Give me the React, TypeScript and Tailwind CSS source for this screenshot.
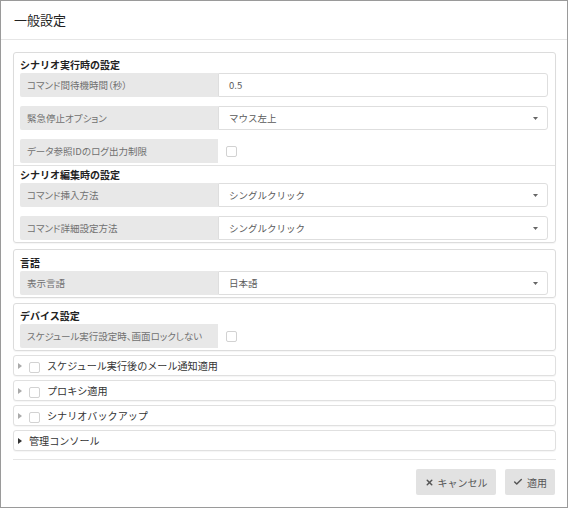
import React from "react";
import { X, Check } from "lucide-react";

const font = { fontFamily: '"Noto Sans CJK JP", "Noto Sans", sans-serif' };

function Caret() {
  return (
    <svg width="5" height="3" viewBox="0 0 5 3" className="mr-[9px]">
      <path d="M0 0 L5 0 L2.5 3 Z" fill="#666" />
    </svg>
  );
}

function Box() {
  return <span className="inline-block h-[11px] w-[11px] rounded-[2px] border border-[#d2d2d2] bg-white" />;
}

function Row({ label, children, className = "" }: { label: string; children: React.ReactNode; className?: string }) {
  return (
    <div className={`flex h-[24px] ${className}`}>
      <div className="flex w-[198px] items-center rounded-l-[2px] bg-[#e8e8e8] pl-[7px] text-[9.5px] text-[#707070] [font-feature-settings:'palt']">
        {label}
      </div>
      {children}
    </div>
  );
}

function Field({ value, select }: { value: string; select?: boolean }) {
  return (
    <div className="flex flex-1 items-center justify-between rounded-r-[3px] border border-[#dedede] bg-white pl-[10px] text-[9.5px] text-[#5a5a5a]">
      <span>{value}</span>
      {select && <Caret />}
    </div>
  );
}

function CheckField() {
  return (
    <div className="flex flex-1 items-center pl-[8px]">
      <Box />
    </div>
  );
}

function Collapse({ label, check = true }: { label: string; check?: boolean }) {
  return (
    <div className="mt-[4px] flex h-[21px] items-center rounded-[3px] border border-[#e0e0e0] bg-white pl-[4px] shadow-[0_1px_1px_rgba(0,0,0,0.04)]">
      <svg width="4" height="6" viewBox="0 0 4 6" className="mr-[7px]">
        <path d="M0 0 L4 3 L0 6 Z" fill={check ? "#aaa" : "#333"} />
      </svg>
      {check && (
        <span className="mr-[7px]">
          <Box />
        </span>
      )}
      <span className="text-[10.1px] text-[#333]">{label}</span>
    </div>
  );
}

export default function App() {
  return (
    <div style={font} className="flex h-[508px] w-[568px] flex-col border border-[#9a9a9a] bg-white">
      <div className="flex h-[39px] items-center border-b border-[#e6e6e6] pl-[13px] text-[13px] text-[#222]">
        一般設定
      </div>
      <div className="flex flex-col pl-[12px] pr-[11px]">
        <div className="mt-[12px] rounded-[3px] border border-[#dcdcdc] pb-[2px] shadow-[0_1px_1px_rgba(0,0,0,0.04)]">
          <div className="pl-[6px] pr-[7px]">
            <div className="flex h-[20px] items-end pb-[1px] text-[10px] font-bold leading-[14px] text-[#222]">
              シナリオ実行時の設定
            </div>
            <Row label="コマンド間待機時間（秒）">
              <Field value="0.5" />
            </Row>
            <Row label="緊急停止オプション" className="mt-[9px]">
              <Field value="マウス左上" select />
            </Row>
            <Row label="データ参照IDのログ出力制限" className="mt-[9px]">
              <CheckField />
            </Row>
          </div>
          <div className="mt-[2px] border-t border-[#e2e2e2] pl-[6px] pr-[7px]">
            <div className="flex h-[17px] items-end pb-[1px] text-[10px] font-bold leading-[14px] text-[#222]">
              シナリオ編集時の設定
            </div>
            <Row label="コマンド挿入方法">
              <Field value="シングルクリック" select />
            </Row>
            <Row label="コマンド詳細設定方法" className="mt-[9px]">
              <Field value="シングルクリック" select />
            </Row>
          </div>
        </div>

        <div className="mt-[6px] rounded-[3px] border border-[#dcdcdc] pb-[2px] pl-[6px] pr-[7px] shadow-[0_1px_1px_rgba(0,0,0,0.04)]">
          <div className="flex h-[21px] items-end pb-[1px] text-[10px] font-bold leading-[14px] text-[#222]">
            言語
          </div>
          <Row label="表示言語">
            <Field value="日本語" select />
          </Row>
        </div>

        <div className="mt-[5px] rounded-[3px] border border-[#dcdcdc] pb-[2px] pl-[6px] pr-[7px] shadow-[0_1px_1px_rgba(0,0,0,0.04)]">
          <div className="flex h-[20px] items-end pb-[1px] text-[10px] font-bold leading-[14px] text-[#222]">
            デバイス設定
          </div>
          <Row label="スケジュール実行設定時、画面ロックしない">
            <CheckField />
          </Row>
        </div>

        <div>
          <Collapse label="スケジュール実行後のメール通知適用" />
          <Collapse label="プロキシ適用" />
          <Collapse label="シナリオバックアップ" />
          <Collapse label="管理コンソール" check={false} />
        </div>

        <div className="mt-[8px] border-t border-[#e6e6e6]" />

        <div className="mt-[9px] flex justify-end gap-[9px] pr-[1px]">
          <button className="flex h-[26px] w-[80px] items-center justify-center gap-[4px] rounded-[2px] bg-[#e2e2e2] text-[10px] text-[#555]">
            <X size={9} strokeWidth={4} color="#555" />
            キャンセル
          </button>
          <button className="flex h-[26px] w-[50px] items-center justify-center gap-[4px] rounded-[2px] bg-[#e2e2e2] text-[10px] text-[#555]">
            <Check size={10} strokeWidth={3.5} color="#555" />
            適用
          </button>
        </div>
      </div>
    </div>
  );
}
